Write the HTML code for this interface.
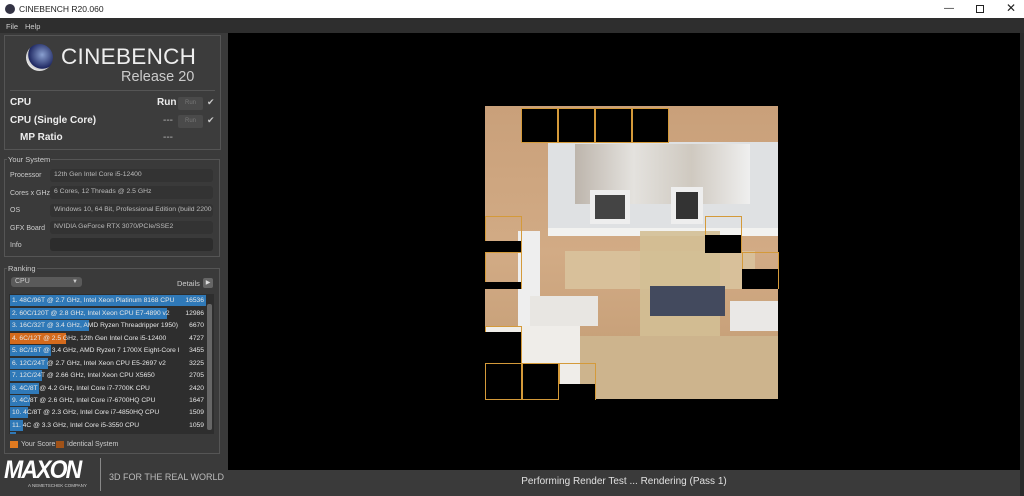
<!DOCTYPE html>
<html><head><meta charset="utf-8"><style>
*{margin:0;padding:0;box-sizing:border-box}
body{width:1024px;height:496px;overflow:hidden;background:#3a3a3a;font-family:"Liberation Sans",sans-serif;position:relative;color:#ddd}
.a{position:absolute}
.t{font-size:8px;color:#ccc;white-space:nowrap}
.fld{position:absolute;left:50px;width:163px;height:13px;background:#333;border-radius:3px;font-size:6.8px;color:#bbb;padding:2px 4px;white-space:nowrap;overflow:hidden}
.row{position:absolute;left:10px;height:11px;width:196px;font-size:6.7px;color:#e6e6e6;white-space:nowrap}
.row .b{position:absolute;left:0;top:0;height:11px;background:#2f79b8}
.row span{position:absolute;left:2px;top:1.5px}
.row i{position:absolute;right:2px;top:1.5px;font-style:normal;background:#2e2e2e;padding-left:2px}
.blk{position:absolute;background:#000;border:1px solid #d49a3a}
.ob{position:absolute;border:1px solid #d49a3a}
</style></head><body>
<div class="a" style="left:0;top:0;width:1024px;height:18px;background:#fff"></div>
<div class="a" style="left:5px;top:4px;width:10px;height:10px;border-radius:50%;background:#334"></div>
<div class="a" style="left:19px;top:4px;font-size:8.5px;color:#222">CINEBENCH R20.060</div>
<div class="a" style="left:944px;top:3px;font-size:10px;color:#222">—</div>
<div class="a" style="left:976px;top:5px;width:8px;height:8px;border:1px solid #222"></div>
<div class="a" style="left:1006px;top:1px;font-size:12px;color:#222">✕</div>
<div class="a" style="left:0;top:18px;width:1024px;height:15px;background:#2e2e2e"></div>
<div class="a t" style="left:6px;top:22px;font-size:7.5px">File</div>
<div class="a t" style="left:25px;top:22px;font-size:7.5px">Help</div>

<div class="a" style="left:4px;top:35px;width:217px;height:115px;border:1px solid #555;background:#3c3c3c"></div>
<div class="a" style="left:26px;top:44px;width:27px;height:27px;border-radius:50%;background:radial-gradient(circle at 60% 40%,#8aa0d0,#1d2660 60%,#ccc 62%,#eee 75%)"></div>
<div class="a" style="left:61px;top:44px;font-size:22.5px;color:#eee;letter-spacing:.3px">CINEBENCH</div>
<div class="a" style="left:121px;top:69px;font-size:14.5px;color:#ccc">Release 20</div>
<div class="a" style="left:10px;top:90px;width:205px;height:1px;background:#555"></div>
<div class="a" style="left:10px;top:97px;font-size:10px;font-weight:bold;color:#eee">CPU</div>
<div class="a" style="left:10px;top:115px;font-size:10px;font-weight:bold;color:#eee">CPU (Single Core)</div>
<div class="a" style="left:20px;top:132px;font-size:10px;font-weight:bold;color:#eee">MP Ratio</div>
<div class="a" style="left:157px;top:97px;font-size:10px;font-weight:bold;color:#eee">Run</div>
<div class="a" style="left:163px;top:115px;font-size:10px;color:#bbb">---</div>
<div class="a" style="left:163px;top:132px;font-size:10px;color:#bbb">---</div>
<div class="a" style="left:178px;top:97px;width:25px;height:13px;background:#4a4a4a;border-radius:2px;font-size:6px;color:#777;text-align:center;line-height:13px">Run</div>
<div class="a" style="left:178px;top:115px;width:25px;height:13px;background:#4a4a4a;border-radius:2px;font-size:6px;color:#777;text-align:center;line-height:13px">Run</div>
<div class="a" style="left:207px;top:97px;font-size:9px;color:#ccc">✔</div>
<div class="a" style="left:207px;top:115px;font-size:9px;color:#ccc">✔</div>

<div class="a" style="left:4px;top:159px;width:216px;height:98px;border:1px solid #555"></div>
<div class="a t" style="left:7px;top:155px;background:#3a3a3a;padding:0 1px;font-size:7.5px">Your System</div>
<div class="a t" style="left:10px;top:172px;font-size:7px">Processor</div>
<div class="a t" style="left:10px;top:190px;font-size:7px">Cores x GHz</div>
<div class="a t" style="left:10px;top:207px;font-size:7px">OS</div>
<div class="a t" style="left:10px;top:225px;font-size:7px">GFX Board</div>
<div class="a t" style="left:10px;top:242px;font-size:7px">Info</div>
<div class="fld" style="top:169px">12th Gen Intel Core i5-12400</div>
<div class="fld" style="top:186px">6 Cores, 12 Threads @ 2.5 GHz</div>
<div class="fld" style="top:204px">Windows 10, 64 Bit, Professional Edition (build 2200</div>
<div class="fld" style="top:221px">NVIDIA GeForce RTX 3070/PCIe/SSE2</div>
<div class="fld" style="top:238px;background:#2c2c2c"></div>

<div class="a" style="left:4px;top:268px;width:216px;height:186px;border:1px solid #555"></div>
<div class="a t" style="left:7px;top:264px;background:#3a3a3a;padding:0 1px;font-size:7.5px">Ranking</div>
<div class="a" style="left:11px;top:277px;width:71px;height:10px;background:#5a5a5a;border-radius:3px;font-size:7px;color:#ccc;padding-left:4px;line-height:10px">CPU<span style="position:absolute;right:4px;top:0;font-size:6px">▼</span></div>
<div class="a t" style="left:177px;top:279px;font-size:7.5px">Details</div>
<div class="a" style="left:203px;top:278px;width:10px;height:10px;background:#666;border-radius:2px;font-size:6px;color:#ddd;text-align:center;line-height:10px">▶</div>
<div class="a" style="left:9px;top:294px;width:205px;height:140px;background:#2e2e2e"></div>
<div class="a" style="left:207px;top:304px;width:5px;height:126px;background:#666;border-radius:2px"></div>
<div class="row" style="top:295px"><div class="b" style="width:196px"></div><span>1. 48C/96T @ 2.7 GHz, Intel Xeon Platinum 8168 CPU</span><i style="background:#2f79b8">16536</i></div>
<div class="row" style="top:308px"><div class="b" style="width:157px"></div><span>2. 60C/120T @ 2.8 GHz, Intel Xeon CPU E7-4890 v2</span><i>12986</i></div>
<div class="row" style="top:320px"><div class="b" style="width:79px"></div><span>3. 16C/32T @ 3.4 GHz, AMD Ryzen Threadripper 1950)</span><i>6670</i></div>
<div class="row" style="top:333px"><div class="b" style="width:56px;background:#d46a1c"></div><span>4. 6C/12T @ 2.5 GHz, 12th Gen Intel Core i5-12400</span><i>4727</i></div>
<div class="row" style="top:345px"><div class="b" style="width:41px"></div><span>5. 8C/16T @ 3.4 GHz, AMD Ryzen 7 1700X Eight-Core I</span><i>3455</i></div>
<div class="row" style="top:358px"><div class="b" style="width:38px"></div><span>6. 12C/24T @ 2.7 GHz, Intel Xeon CPU E5-2697 v2</span><i>3225</i></div>
<div class="row" style="top:370px"><div class="b" style="width:32px"></div><span>7. 12C/24T @ 2.66 GHz, Intel Xeon CPU X5650</span><i>2705</i></div>
<div class="row" style="top:383px"><div class="b" style="width:29px"></div><span>8. 4C/8T @ 4.2 GHz, Intel Core i7-7700K CPU</span><i>2420</i></div>
<div class="row" style="top:395px"><div class="b" style="width:20px"></div><span>9. 4C/8T @ 2.6 GHz, Intel Core i7-6700HQ CPU</span><i>1647</i></div>
<div class="row" style="top:407px"><div class="b" style="width:18px"></div><span>10. 4C/8T @ 2.3 GHz, Intel Core i7-4850HQ CPU</span><i>1509</i></div>
<div class="row" style="top:420px"><div class="b" style="width:13px"></div><span>11. 4C @ 3.3 GHz, Intel Core i5-3550 CPU</span><i>1059</i></div>
<div class="a" style="left:10px;top:432px;width:6px;height:2px;background:#2f79b8"></div>
<div class="a" style="left:10px;top:441px;width:8px;height:7px;background:#e07a20"></div>
<div class="a t" style="left:21px;top:441px;font-size:7px">Your Score</div>
<div class="a" style="left:56px;top:441px;width:8px;height:7px;background:#a05218"></div>
<div class="a t" style="left:67px;top:441px;font-size:7px">Identical System</div>

<div class="a" style="left:4px;top:456px;font-size:25px;font-weight:bold;font-style:italic;color:#fff;letter-spacing:-2px;transform:scaleX(.92);transform-origin:left">MAXON</div>
<div class="a" style="left:28px;top:483px;font-size:4.5px;color:#ccc">A NEMETSCHEK COMPANY</div>
<div class="a" style="left:100px;top:458px;width:1px;height:33px;background:#888"></div>
<div class="a" style="left:109px;top:472px;font-size:9px;color:#bbb">3D FOR THE REAL WORLD</div>

<div class="a" style="left:228px;top:33px;width:792px;height:437px;background:#000"></div>
<div class="a" style="left:1020px;top:33px;width:4px;height:463px;background:#2a2a2a"></div>
<div class="a" style="left:485px;top:106px;width:293px;height:293px;background:linear-gradient(180deg,#c9a07a 0%,#d2ab85 50%,#c19a72 100%);overflow:hidden">
  <div class="a" style="left:63px;top:36px;width:230px;height:86px;background:#dfe1e3"></div>
  <div class="a" style="left:90px;top:38px;width:175px;height:60px;background:linear-gradient(90deg,#bdb5ac,#e4e2de,#cfc9c0,#efefef)"></div>
  <div class="a" style="left:105px;top:84px;width:40px;height:34px;background:#444;border:5px solid #eee"></div>
  <div class="a" style="left:186px;top:81px;width:32px;height:37px;background:#333;border:5px solid #eee"></div>
  <div class="a" style="left:63px;top:122px;width:230px;height:8px;background:#f2f2f0"></div>
  <div class="a" style="left:80px;top:145px;width:190px;height:38px;background:#d8c09a"></div>
  <div class="a" style="left:33px;top:125px;width:22px;height:100px;background:#eee"></div>
  <div class="a" style="left:45px;top:190px;width:68px;height:30px;background:#e8e6e2"></div>
  <div class="a" style="left:155px;top:125px;width:80px;height:170px;background:#d3bf95;opacity:.9"></div>
  <div class="a" style="left:165px;top:180px;width:75px;height:30px;background:#434a5e"></div>
  <div class="a" style="left:245px;top:195px;width:48px;height:30px;background:#eae8e6"></div>
  <div class="a" style="left:0;top:220px;width:95px;height:73px;background:#efede9"></div>
  <div class="a" style="left:95px;top:230px;width:198px;height:63px;background:#cdb48d"></div>
</div>
<div class="blk" style="left:521px;top:108px;width:37px;height:35px"></div>
<div class="blk" style="left:558px;top:108px;width:37px;height:35px"></div>
<div class="blk" style="left:595px;top:108px;width:37px;height:35px"></div>
<div class="blk" style="left:632px;top:108px;width:37px;height:35px"></div>
<div class="ob" style="left:485px;top:216px;width:37px;height:37px"></div>
<div class="a" style="left:485px;top:241px;width:36px;height:11px;background:#000"></div>
<div class="ob" style="left:485px;top:252px;width:37px;height:37px"></div>
<div class="a" style="left:485px;top:282px;width:36px;height:7px;background:#000"></div>
<div class="ob" style="left:705px;top:216px;width:37px;height:37px"></div>
<div class="a" style="left:705px;top:235px;width:36px;height:18px;background:#000"></div>
<div class="ob" style="left:742px;top:252px;width:37px;height:37px"></div>
<div class="a" style="left:742px;top:269px;width:36px;height:20px;background:#000"></div>
<div class="ob" style="left:485px;top:326px;width:37px;height:37px"></div>
<div class="a" style="left:485px;top:332px;width:36px;height:31px;background:#000"></div>
<div class="blk" style="left:485px;top:363px;width:37px;height:37px"></div>
<div class="blk" style="left:522px;top:363px;width:37px;height:37px"></div>
<div class="ob" style="left:559px;top:363px;width:37px;height:37px"></div>
<div class="a" style="left:559px;top:384px;width:36px;height:16px;background:#000"></div>

<div class="a" style="left:228px;top:476px;width:792px;text-align:center;font-size:10px;color:#e0e0e0">Performing Render Test ... Rendering (Pass 1)</div>
</body></html>
